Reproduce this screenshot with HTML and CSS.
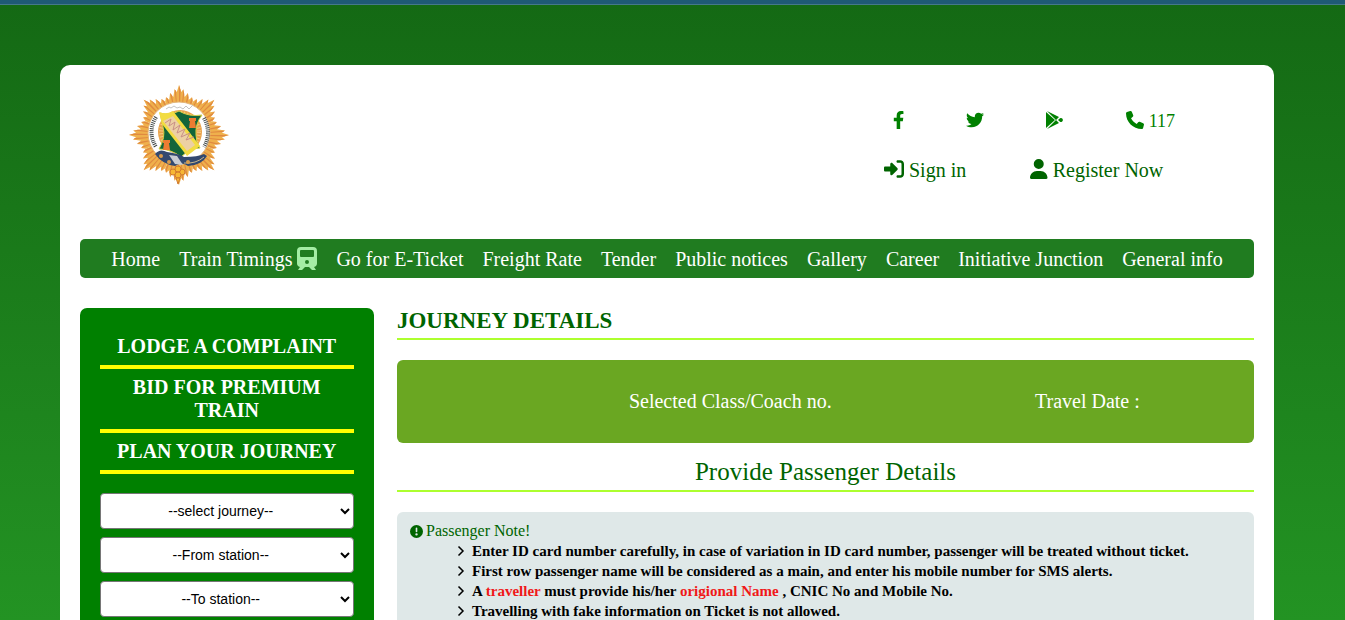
FILE: index.html
```html
<!DOCTYPE html>
<html lang="en">
<head>
<meta charset="utf-8">
<title>Journey Details</title>
<link rel="stylesheet" href="styles.css">
</head>
<body>
<div class="card">
  <header class="header">
    <a class="logo" href="#" aria-label="Railways home">
      <svg viewBox="0 0 120 120" width="120" height="120">
        <defs>
          <g id="ray">
            <path fill="#efb04c" d="M0 0L-13.8-33.3-13-37.8-9.8-35.2-8.9-42-5.7-38-4.4-45.8-2.2-43 0-50 2.2-43 4.4-45.8 5.7-38 8.9-42 9.8-35.2 13-37.8 13.8-33.3z"/>
            <path fill="#e08a40" d="M0 0L-13-37.8-11.2-36.4zM0 0L-8.9-42-7-39.8zM0 0L-4.4-45.8-3-44zM0 0L0-50 1.6-45zM0 0L4.4-45.8 5.2-41zM0 0L8.9-42 9.5-37.5zM0 0L13-37.8 13.6-34.5z"/>
          </g>
        </defs>
        <g transform="translate(59 60)">
          <use href="#ray"/><use href="#ray" transform="rotate(45)"/><use href="#ray" transform="rotate(90)"/><use href="#ray" transform="rotate(135)"/><use href="#ray" transform="rotate(180)"/><use href="#ray" transform="rotate(225)"/><use href="#ray" transform="rotate(270)"/><use href="#ray" transform="rotate(315)"/>
        </g>
        <circle cx="59" cy="58" r="31" fill="#fff" stroke="#e3b67a"/>
        <circle cx="60" cy="57" r="22" fill="#e9a24c"/>
        <circle cx="60" cy="57" r="19" fill="none" stroke="#f6cc80" stroke-width="4" stroke-dasharray="1 2"/>
        <path fill="none" stroke="#c4c4c4" d="M46 34l3-2 2 1 3-2 3 2 3-1 3 2 3-3 3 3 4-4"/>
        <path fill="none" stroke="#414848" stroke-width="4" stroke-dasharray="1 1" d="M36 42Q27 57 36 72M84 43Q92 58 84 72"/>
        <path fill="#12653a" stroke="#d8d046" d="M40 38Q50 41 59 36 69 42 82 40 75 49 76 60 76 68 80 73 70 73 61 82 51 74 39 74 46 62 43 52z"/>
        <path fill="#f2dc42" d="M39 37Q46 40 53 36L80 71 67 81 42 49z"/>
        <path fill="#ecd0a4" d="M43 46L53 41 75 70 67 76z"/>
        <path fill="none" stroke="#c98f86" d="M45 48l6-4-2 7 6-4-2 8 7-5-3 8 8-4-4 8 9-4-4 7 8-3"/>
        <path fill="#ed7c32" d="M69 43h7v3h-1l1 7h-7l1-7h-1zM43 65h7v3h-1l1 7h-7l1-7h-1z"/>
        <path fill="#33496f" d="M35 79Q40 73 47 77 60 79 64 82 78 82 84 79L87 81Q82 90 68 91 62 86 55 91 42 89 35 79z"/>
        <path fill="#c9ccd2" d="M49 80l8 1 6 9-8-1z"/>
        <path fill="none" stroke="#c9b68c" d="M64 88Q76 89 84 82"/>
        <g fill="#d89b4c"><circle cx="41" cy="81" r="2"/><circle cx="49" cy="87" r="2"/><circle cx="68" cy="87" r="2"/></g>
        <g fill="#f7b733" stroke="#d27c30"><circle cx="53" cy="97" r="3"/><circle cx="62" cy="97" r="3"/><circle cx="58" cy="94" r="3"/><circle cx="58" cy="100" r="3"/><path d="M56 103h4l-2 6z"/></g>
      </svg>
    </a>
    <div class="header-links">
      <div class="socials">
        <a href="#" aria-label="Facebook"><svg class="icon" viewBox="0 0 320 512"><path d="M279.14 288l14.22-92.66h-88.91v-60.13c0-25.35 12.42-50.06 52.24-50.06h40.42V6.26S260.43 0 225.36 0c-73.22 0-121.08 44.38-121.08 124.72v70.62H22.89V288h81.39v224h100.17V288z"/></svg></a>
        <a href="#" aria-label="Twitter"><svg class="icon" viewBox="0 0 512 512"><path d="M459.37 151.716c.325 4.548.325 9.097.325 13.645 0 138.72-105.583 298.558-298.558 298.558-59.452 0-114.68-17.219-161.137-47.106 8.447.974 16.568 1.299 25.34 1.299 49.055 0 94.213-16.568 130.274-44.832-46.132-.975-84.792-31.188-98.112-72.772 6.498.974 12.995 1.624 19.818 1.624 9.421 0 18.843-1.3 27.614-3.573-48.081-9.747-84.143-51.98-84.143-102.985v-1.299c13.969 7.797 30.214 12.67 47.431 13.319-28.264-18.843-46.781-51.005-46.781-87.391 0-19.492 5.197-37.36 14.294-52.954 51.655 63.675 129.3 105.258 216.365 109.807-1.624-7.797-2.599-15.918-2.599-24.04 0-57.828 46.782-104.934 104.934-104.934 30.213 0 57.502 12.67 76.67 33.137 23.715-4.548 46.456-13.32 66.599-25.34-7.798 24.366-24.366 44.833-46.132 57.827 21.117-2.273 41.584-8.122 60.426-16.243-14.292 20.791-32.161 39.308-52.628 54.253z"/></svg></a>
        <a href="#" aria-label="Google Play"><svg class="icon" viewBox="0 0 18 18"><path d="M0 1L9 9 0 17zM1 0L13 6 10 9zM1 18L13 12 10 9zM14 7.2A2 2 0 1 1 14 10.8L12 9z"/></svg></a>
        <a href="#"><svg class="icon" viewBox="0 0 512 512"><path d="M164.9 24.6c-7.7-18.6-28-28.5-47.4-23.2l-88 24C12.1 30.2 0 46 0 64C0 311.4 200.6 512 448 512c18 0 33.8-12.1 38.6-29.5l24-88c5.3-19.4-4.6-39.7-23.2-47.4l-96-40c-16.3-6.8-35.2-2.1-46.3 11.6L304.7 368C234.3 334.7 177.3 277.7 144 207.3L193.3 167c13.7-11.2 18.4-30 11.6-46.3l-40-96z"/></svg> 117</a>
      </div>
      <div class="account">
        <a href="#"><svg class="icon" viewBox="0 0 512 512"><path d="M217.9 105.9L340.7 228.7c7.2 7.2 11.3 17.1 11.3 27.3s-4.1 20.1-11.3 27.3L217.9 406.1c-6.4 6.4-15 9.9-24 9.9c-18.7 0-33.9-15.2-33.9-33.9l0-62.1L32 320c-17.7 0-32-14.3-32-32l0-64c0-17.7 14.3-32 32-32l128 0 0-62.1c0-18.7 15.2-33.9 33.9-33.9c9 0 17.6 3.6 24 9.9zM352 416l64 0c17.7 0 32-14.3 32-32l0-256c0-17.7-14.3-32-32-32l-64 0c-17.7 0-32-14.3-32-32s14.3-32 32-32l64 0c53 0 96 43 96 96l0 256c0 53-43 96-96 96l-64 0c-17.7 0-32-14.3-32-32s14.3-32 32-32z"/></svg> Sign in</a>
        <a href="#"><svg class="icon" viewBox="0 0 448 512"><path d="M224 256A128 128 0 1 0 224 0a128 128 0 1 0 0 256zm-45.7 48C79.8 304 0 383.8 0 482.3C0 498.7 13.3 512 29.7 512H418.3c16.4 0 29.7-13.3 29.7-29.7C448 383.8 368.2 304 269.7 304H178.3z"/></svg> Register Now</a>
      </div>
    </div>
  </header>

  <nav class="nav">
    <a href="#">Home</a>
    <a href="#">Train Timings <svg class="train" viewBox="0 0 20 24"><path fill-rule="evenodd" d="M4 0h12a4 4 0 0 1 4 4v12a4 4 0 0 1-3 4l2 3h-4l-3-3H8l-3 3H1l2-3a4 4 0 0 1-3-4V4a4 4 0 0 1 4-4zM4 3a1 1 0 0 0-1 1v5a1 1 0 0 0 1 1h12a1 1 0 0 0 1-1V4a1 1 0 0 0-1-1zM10 13a2 2 0 1 0 0 4 2 2 0 0 0 0-4z"/></svg></a>
    <a href="#">Go for E-Ticket</a>
    <a href="#">Freight Rate</a>
    <a href="#">Tender</a>
    <a href="#">Public notices</a>
    <a href="#">Gallery</a>
    <a href="#">Career</a>
    <a href="#">Initiative Junction</a>
    <a href="#">General info</a>
  </nav>

  <div class="content">
    <aside class="sidebar">
      <h3><a href="#">LODGE A COMPLAINT</a></h3>
      <h3><a href="#">BID FOR PREMIUM TRAIN</a></h3>
      <h3>PLAN YOUR JOURNEY</h3>
      <form class="plan">
        <select aria-label="Journey"><option>--select journey--</option></select>
        <select aria-label="From station"><option>--From station--</option></select>
        <select aria-label="To station"><option>--To station--</option></select>
      </form>
    </aside>
    <main class="main">
      <h1>JOURNEY DETAILS</h1>
      <section class="trip">
        <span></span>
        <span>Selected Class/Coach no.</span>
        <span>Travel Date :</span>
      </section>
      <h2>Provide Passenger Details</h2>
      <section class="note">
        <p><svg class="alert" viewBox="0 0 16 16"><path fill-rule="evenodd" d="M8 0a8 8 0 1 1 0 16A8 8 0 0 1 8 0zm0 3a1 1 0 0 0-1 1v4a1 1 0 0 0 2 0V4a1 1 0 0 0-1-1zm0 7a1 1 0 1 0 0 3 1 1 0 0 0 0-3z"/></svg>Passenger Note!</p>
        <ul>
          <li><svg class="angle" viewBox="0 0 16 24"><path d="M3 3l9 9-9 9"/></svg>Enter ID card number carefully, in case of variation in ID card number, passenger will be treated without ticket.</li>
          <li><svg class="angle" viewBox="0 0 16 24"><path d="M3 3l9 9-9 9"/></svg>First row passenger name will be considered as a main, and enter his mobile number for SMS alerts.</li>
          <li><svg class="angle" viewBox="0 0 16 24"><path d="M3 3l9 9-9 9"/></svg>A <em>traveller</em> must provide his/her <em>origional Name</em> , CNIC No and Mobile No.</li>
          <li><svg class="angle" viewBox="0 0 16 24"><path d="M3 3l9 9-9 9"/></svg>Travelling with fake information on Ticket is not allowed.</li>
        </ul>
      </section>
    </main>
  </div>
</div>
</body>
</html>
```
FILE: styles.css
```css
* { box-sizing: border-box; }

body {
  margin: 0;
  min-height: 100vh;
  display: flex;
  flex-direction: column;
  padding: 61px 71px 0 60px;
  border-top: 4px solid #1f5a75;
  box-shadow: inset 0 1px #45788a;
  background: linear-gradient(#146914, #239323) no-repeat;
  font-family: "Liberation Serif", "Times New Roman", serif;
  color: #000;
}

a { color: inherit; text-decoration: none; }
h1, h2, h3, p, ul { margin: 0; padding: 0; }

.card {
  flex: 1;
  display: flex;
  flex-direction: column;
  padding: 0 20px;
  background: #fff;
  border-radius: 10px 10px 0 0;
}

.header {
  display: flex;
  justify-content: space-between;
  height: 174px;
  padding: 10px 79px 0 40px;
}
.logo { height: 120px; }
.logo svg { display: block; }

.header-links { width: 292px; padding-top: 34px; }
.socials, .account { display: flex; white-space: nowrap; }
.socials { justify-content: space-between; padding-left: 10px; color: #008000; font-size: 18px; line-height: 24px; }
.account { gap: 64px; padding: 25px 0 0 1px; color: #006400; font-size: 20px; line-height: 24px; }
.icon { height: 1em; fill: currentColor; vertical-align: -2px; }

.nav {
  display: flex;
  justify-content: center;
  gap: 19px;
  height: 39px;
  line-height: 40px;
  border-radius: 5px;
  background: #207c20;
  color: #fff;
  font-size: 20px;
  white-space: nowrap;
}
.train { width: 20px; height: 24px; fill: #a4eda4; vertical-align: -5px; }

.content {
  flex: 1;
  display: grid;
  grid-template-columns: 25% 73%;
  justify-content: space-between;
  margin-top: 30px;
}

.sidebar {
  padding: 20px 20px 0;
  border-radius: 7px 7px 0 0;
  background: #008000;
  text-align: center;
}
.sidebar h3 {
  padding: 7px 16px;
  border-bottom: 4px solid #ff0;
  color: #fff;
  font-size: 20px;
  line-height: 23px;
}
.plan { display: flex; flex-direction: column; gap: 8px; padding-top: 19px; }
.plan select {
  width: 100%;
  height: 36px;
  border: 1px solid #767676;
  border-radius: 4px;
  background-color: #fff;
  color: #000;
  font: 14px "Liberation Sans", Arial, sans-serif;
  text-align: center;
}

.main h1, .main h2 { border-bottom: 2px solid #adff2f; color: #006400; }
.main h1 { height: 32px; font-size: 23px; line-height: 26px; }
.trip {
  display: grid;
  grid-template-columns: 3fr 8fr 7fr;
  align-items: center;
  height: 83px;
  margin-top: 20px;
  border-radius: 6px;
  background: #6aa722;
  color: #fff;
  font-size: 20px;
  text-align: center;
}
.main h2 {
  height: 49px;
  padding-top: 14px;
  font-size: 25px;
  line-height: 29px;
  font-weight: 400;
  text-align: center;
}
.note {
  margin-top: 20px;
  padding: 9px 13px 0;
  border-radius: 6px 6px 0 0;
  background: #dfe8e8;
}
.note p { color: #006400; font-size: 16px; line-height: 20px; }
.note ul { padding-left: 47px; list-style: none; }
.note li { font-size: 15px; font-weight: 700; line-height: 20px; }
.note em { color: #f01818; font-style: normal; }
.alert { width: 13px; height: 13px; margin-right: 3px; fill: #006400; vertical-align: -2px; }
.angle { width: 8px; height: 12px; margin-right: 7px; fill: none; stroke: #000; stroke-width: 3; vertical-align: -1px; }
```
